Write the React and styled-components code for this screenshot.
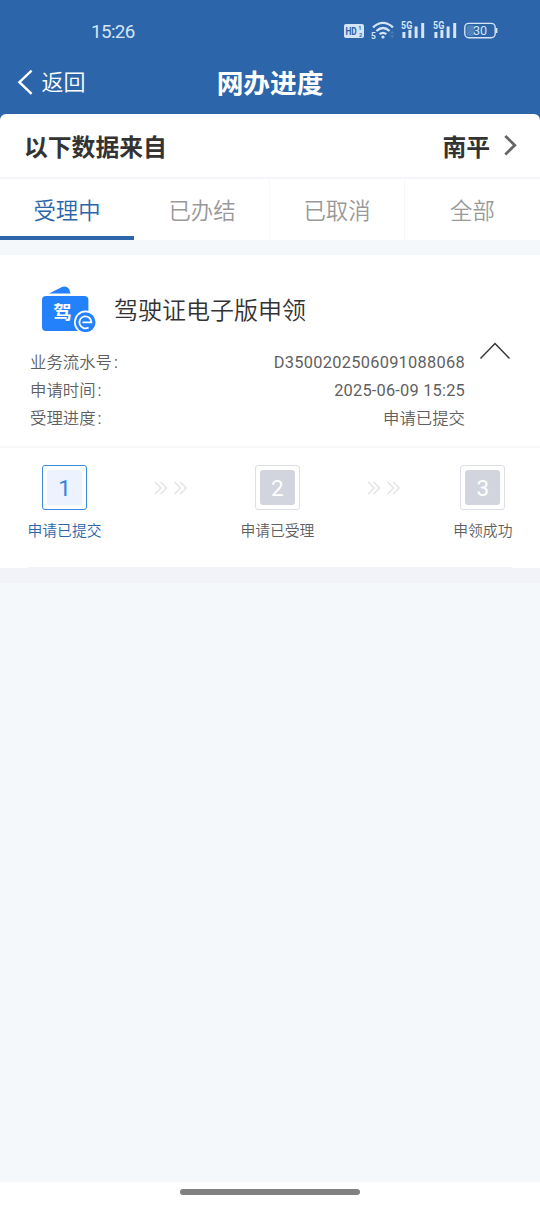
import React from 'react';
import styled, { createGlobalStyle } from 'styled-components';

export default function App() {

  const tabs = ['受理中', '已办结', '已取消', '全部'];

  const details = [
    { label: '业务流水号', value: 'D3500202506091088068', spacing: '0.27px' },
    { label: '申请时间', value: '2025-06-09 15:25', spacing: '0.2px' },
    { label: '受理进度', value: '申请已提交' },
  ];

  const steps = [
    { num: 1, text: '申请已提交', active: true },
    { num: 2, text: '申请已受理' },
    { num: 3, text: '申领成功' },
  ];

  return (
    <>
      <GlobalStyle />
      <Page>
        <Header>
          <StatusBar>
            <Clock>15:26</Clock>
            <StatusIcons />
          </StatusBar>
          <NavBar>
            <Back>
              <svg width="17" height="26" viewBox="0 0 17 26" fill="none" stroke="#fff" strokeWidth="2.4">
                <path d="M14.6 0.6 L2.4 12.2 L14.6 23.8" />
              </svg>
              <span>返回</span>
            </Back>
            <Title>网办进度</Title>
          </NavBar>
        </Header>
        <SourceWrap>
          <Source>
            <span>以下数据来自</span>
            <City>
              <span>南平</span>
              <svg width="14" height="22" viewBox="0 0 14 22" fill="none" stroke="#666" strokeWidth="2.8">
                <path d="M1.3 1 L10.8 10.2 L1.3 19.4" />
              </svg>
            </City>
          </Source>
        </SourceWrap>
        <Tabs>
          {tabs.map((tab, i) => <Tab key={tab} $active={i === 0}>{tab}</Tab>)}
        </Tabs>
        <Card>
          <CardHead>
            <LicenseIcon />
            <h2>驾驶证电子版申领</h2>
          </CardHead>
          <CardBody>
            <Details>
              {details.map((item) => (
                <DetailRow key={item.label}>
                  <span>{item.label}<Colon>:</Colon></span>
                  <Value $spacing={item.spacing}>{item.value}</Value>
                </DetailRow>
              ))}
            </Details>
            <Collapse width="32" height="18" viewBox="0 0 32 18" fill="none" stroke="#333" strokeWidth="1.4">
              <path d="M1.5 16.5 L16 1.4 L30.5 16.5" />
            </Collapse>
          </CardBody>
          <Steps>
            {steps.map((step, i) => (
              <React.Fragment key={step.num}>
                {i > 0 && <Arrows />}
                <Step $active={step.active}>
                  <StepBox $active={step.active}><b>{step.num}</b></StepBox>
                  <p>{step.text}</p>
                </Step>
              </React.Fragment>
            ))}
          </Steps>
          <CardLine />
        </Card>
        <Strip />
        <Empty />
        <HomeBar><i /></HomeBar>
      </Page>
    </>
  );
}

function Signal() {
  return (
    <svg width="25" height="20" viewBox="0 0 25 20" fill="#d5e4f6">
      <text transform="scale(0.86 1)" x="0" y="9" fontSize="10.4" fontWeight="700" fontFamily="Roboto">5G</text>
      <rect x="1.4" y="12" width="3" height="6" />
      <rect x="7.4" y="10" width="3" height="8" />
      <rect x="13.6" y="6.5" width="3" height="11.5" />
      <rect x="20.2" y="3" width="3" height="15" />
    </svg>
  );
}

function StatusIcons() {
  return (
    <Icons>
      <svg width="20" height="20" viewBox="0 0 20 20">
        <rect x="0" y="4" width="20" height="14" rx="2" fill="#d5e4f6" />
        <g fill="#2c65a9" fontFamily="Roboto" fontWeight="700">
          <text transform="translate(1.4 15.2) scale(0.72 1)" fontSize="11.6">HD</text>
          <text x="14.2" y="10" fontSize="5.6">1</text>
          <text x="15" y="17" fontSize="5.6">2</text>
        </g>
      </svg>
      <svg width="24" height="20" viewBox="0 0 24 20" fill="none" stroke="#d5e4f6" strokeWidth="2.2">
        <path d="M2 7.4 Q12 -1.6 22 7.4" />
        <path d="M5.4 11 Q12 5 18.6 11" />
        <path d="M8.6 14.2 Q12 11.4 15.4 14.2" />
        <circle cx="12" cy="17" r="1.6" fill="#d5e4f6" stroke="none" />
        <text x="0" y="19" fontSize="8.5" fontWeight="700" fontFamily="Roboto" fill="#d5e4f6" stroke="none">5</text>
        <path d="M19 13.4 L21.2 11 L23.4 13.4 Z M19 15.6 L21.2 18 L23.4 15.6 Z" fill="#4d7fbb" stroke="none" />
      </svg>
      <Signal />
      <Signal />
      <svg width="34" height="20" viewBox="0 0 34 20">
        <rect x="0.8" y="3.4" width="30.4" height="14.4" rx="4" fill="none" stroke="#d5e4f6" strokeWidth="1.4" />
        <rect x="2.6" y="5.2" width="8" height="10.8" rx="2" fill="#4f81bb" />
        <path d="M32.6 8 V13" stroke="#d5e4f6" strokeWidth="1.6" />
        <text x="16" y="15.2" fontSize="12.6" textAnchor="middle" fontFamily="Roboto" fill="#d5e4f6">30</text>
      </svg>
    </Icons>
  );
}

function LicenseIcon() {
  return (
    <svg width="56" height="46" viewBox="0 0 56 46">
      <path d="M7 7.6 L20.5 0.8 Q25.2 -0.6 27 3 L28.6 7.6 Z" fill="#2382fb" />
      <rect x="0" y="10" width="46.4" height="35" rx="4" fill="#2382fb" />
      <text x="20.6" y="33" fontSize="18.5" fontWeight="700" textAnchor="middle" fill="#fff">驾</text>
      <circle cx="43.6" cy="36.2" r="11.6" fill="#fff" />
      <circle cx="43.6" cy="36.2" r="9.9" fill="#2382fb" />
      <path d="M40.4 36.4 H49.4 A6 6 0 1 0 46.6 41.4" fill="none" stroke="#fff" strokeWidth="1.8" />
    </svg>
  );
}

function Arrows() {
  return (
    <ArrowSvg width="34" height="14" viewBox="0 0 34 14" fill="none" stroke="#dfe2e5" strokeWidth="1.3">
      <path d="M1 1 L7 7 L1 13 M6.6 1 L12.6 7 L6.6 13" />
      <path d="M20.6 1 L26.6 7 L20.6 13 M26.2 1 L32.2 7 L26.2 13" />
    </ArrowSvg>
  );
}

const GlobalStyle = createGlobalStyle`
  * {
    box-sizing: border-box;
  }
  body {
    margin: 0;
    font-family: Roboto, 'Noto Sans CJK SC', sans-serif;
    color: #333;
  }
  h1, h2, p {
    margin: 0;
  }
`;

const Page = styled.div`
  display: flex;
  flex-direction: column;
  width: 540px;
  height: 1206px;
  overflow: hidden;
  background: #f4f8fa;
`;

const Header = styled.header`
  height: 114px;
  background: #2c65a9;
  color: white;
`;

const StatusBar = styled.div`
  display: flex;
  align-items: center;
  justify-content: space-between;
  height: 62px;
  padding: 1px 42px 0 91px;
`;

const Clock = styled.span`
  font-size: 18.8px;
  letter-spacing: -0.6px;
  color: #d5e4f6;
`;

const Icons = styled.div`
  display: flex;
  gap: 6.5px;
  margin-top: -3px;
`;

const NavBar = styled.div`
  display: grid;
  grid-template-columns: 1fr auto 1fr;
  align-items: center;
  height: 40px;
  padding: 0 17px;
`;

const Back = styled.div`
  display: flex;
  align-items: center;
  gap: 7.5px;
  font-size: 22px;
  font-weight: 350;
  line-height: 32px;
`;

const Title = styled.h1`
  padding-top: 3px;
  font-size: 26.7px;
  line-height: 38px;
  font-weight: 700;
`;

const SourceWrap = styled.div`
  background: #2c65a9;
`;

const Source = styled.div`
  display: flex;
  align-items: center;
  justify-content: space-between;
  height: 65px;
  padding: 0 22px 0 24px;
  border-bottom: 2px solid #f4f6fa;
  border-radius: 6px 6px 0 0;
  background: white;
  font-size: 23.8px;
  font-weight: 700;
`;

const City = styled.div`
  display: flex;
  align-items: center;
  gap: 14px;
`;

const Tabs = styled.nav`
  display: grid;
  grid-template-columns: repeat(4, 1fr);
  height: 61px;
  background: white;
`;

const Tab = styled.div`
  display: flex;
  align-items: center;
  justify-content: center;
  padding-top: ${(p) => (p.$active ? '3px' : '0')};
  padding-bottom: ${(p) => (p.$active ? '0' : '1px')};
  border-right: ${(p) => (p.$active ? 'none' : '1px solid #f6f8fa')};
  border-bottom: ${(p) => (p.$active ? '4px solid #2c65a9' : 'none')};
  margin-right: ${(p) => (p.$active ? '1px' : '0')};
  font-size: 22.4px;
  font-weight: 350;
  color: ${(p) => (p.$active ? '#2c65a9' : '#999')};
  &:last-child {
    border-right: none;
  }
`;

const Card = styled.section`
  height: 313px;
  margin-top: 15px;
  background: white;
`;

const CardHead = styled.div`
  display: flex;
  align-items: center;
  gap: 16px;
  height: 93px;
  padding: 15px 0 0 42px;
  h2 {
    font-size: 24px;
    font-weight: 350;
    line-height: 36px;
    padding-top: 3px;
  }
`;

const CardBody = styled.div`
  display: flex;
  height: 100px;
  padding: 1px 29px 0 30px;
  border-bottom: 2px solid #f6f7f8;
`;

const Details = styled.div`
  width: 435px;
  margin-right: 14px;
`;

const DetailRow = styled.div`
  display: flex;
  justify-content: space-between;
  height: 28px;
  line-height: 28px;
  font-size: 16.4px;
  font-weight: 350;
  color: #5f5f5f;
`;

const Value = styled.span`
  font-weight: ${(p) => (p.$spacing ? 400 : 350)};
  letter-spacing: ${(p) => p.$spacing || 'normal'};
`;

const Colon = styled.span`
  margin-left: 2px;
  font-weight: 400;
`;

const Collapse = styled.svg`
  margin-top: -7px;
`;

const Steps = styled.div`
  display: flex;
  justify-content: space-between;
  height: 118px;
  padding: 17px 27.5px 0;
`;

const Step = styled.div`
  display: flex;
  flex-direction: column;
  align-items: center;
  color: ${(p) => (p.$active ? '#2c65a9' : '#5f5f5f')};
  p {
    margin-top: 10px;
    font-size: 14.8px;
    font-weight: 350;
    line-height: 22px;
  }
`;

const StepBox = styled.div`
  width: 45px;
  height: 45px;
  padding: 4px;
  border: ${(p) => (p.$active ? '1.5px solid #3b8ae0' : '1.5px solid #dcdee5')};
  border-radius: 3px;
  b {
    display: flex;
    align-items: center;
    justify-content: center;
    height: 100%;
    padding-top: 1px;
    border-radius: 3px;
    background: ${(p) => (p.$active ? '#ecf3fe' : '#d2d5de')};
    color: ${(p) => (p.$active ? '#2f83de' : '#fff')};
    font-size: 22.5px;
    font-weight: 400;
  }
`;

const ArrowSvg = styled.svg`
  margin-top: 16px;
`;

const CardLine = styled.div`
  height: 1px;
  margin: 1px 28px 0;
  background: #f2f3f8;
`;

const Strip = styled.div`
  height: 15px;
  background: #f2f3f8;
`;

const Empty = styled.div`
  flex: 1;
`;

const HomeBar = styled.div`
  display: flex;
  justify-content: center;
  height: 24px;
  padding-top: 7px;
  background: white;
  i {
    width: 180px;
    height: 6px;
    border-radius: 3px;
    background: #808080;
  }
`;
